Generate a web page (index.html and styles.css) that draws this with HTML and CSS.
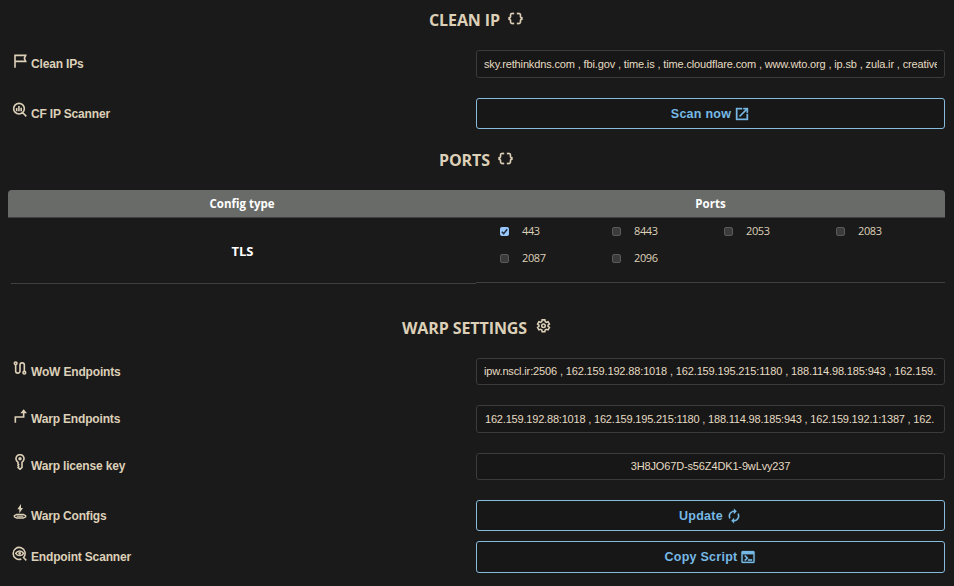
FILE: index.html
```html
<!DOCTYPE html>
<html lang="en">
<head>
<meta charset="utf-8">
<title>Settings</title>
<link rel="stylesheet" href="styles.css">
</head>
<body>
<svg width="0" height="0" class="defs">
  <symbol id="data" viewBox="0 0 24 24"><path stroke="currentColor" stroke-width=".3" d="M4 7v2c0 .55-.45 1-1 1H2v4h1c.55 0 1 .45 1 1v2c0 1.650 1.350 3 3 3h3v-2H7c-.55 0-1-.45-1-1v-2c0-1.300-.84-2.420-2-2.830v-.34C5.160 11.420 6 10.300 6 9V7c0-.55.45-1 1-1h3V4H7C5.350 4 4 5.350 4 7zM21 10c-.55 0-1-.45-1-1V7c0-1.650-1.350-3-3-3h-3v2h3c.55 0 1 .45 1 1v2c0 1.300.84 2.420 2 2.830v.34c-1.160.41-2 1.520-2 2.830v2c0 .55-.45 1-1 1h-3v2h3c1.650 0 3-1.350 3-3v-2c0-.55.45-1 1-1h1v-4z"/></symbol>
  <symbol id="launch" viewBox="0 0 24 24"><path stroke="currentColor" stroke-width=".6" d="M19 19H5V5h7V3H3v18h18v-9h-2zM14 3v2h3.590l-9.830 9.830 1.410 1.410L19 6.410V10h2V3z"/></symbol>
  <symbol id="sync" viewBox="0 0 24 24"><path stroke="currentColor" stroke-width=".4" d="M12 6v3l4-4-4-4v3c-4.420 0-8 3.580-8 8 0 1.570.46 3.030 1.240 4.260L6.700 14.800A5.870 5.870 0 0 1 6 12c0-3.310 2.690-6 6-6zm6.760 1.740L17.300 9.200c.44.84.7 1.790.7 2.800 0 3.310-2.690 6-6 6v-3l-4 4 4 4v-3c4.420 0 8-3.580 8-8 0-1.570-.46-3.030-1.240-4.260z"/></symbol>
  <symbol id="terminal" viewBox="0 0 24 24"><path stroke="currentColor" stroke-width=".4" fill-rule="evenodd" d="M4 3h16c1.100 0 2 .9 2 2v14c0 1.100-.9 2-2 2H4c-1.100 0-2-.9-2-2V5c0-1.100.9-2 2-2zm0 5v11h16V8zm2.500 2.500L8 9l4.500 4.500L8 18l-1.500-1.500 3-3zM12 15.500h6v2h-6z"/></symbol>
  <symbol id="gear" viewBox="0 0 24 24"><g fill="none" stroke="currentColor" stroke-width="2.500"><path d="M9.800 3h4.400l.5 2.800 1.900 1.100 2.700-1 2.200 3.800-2.200 1.800v1.900l2.200 1.800-2.200 3.800-2.700-1-1.900 1.100-.5 2.800H9.800l-.5-2.800-1.900-1.100-2.700 1-2.200-3.800 2.200-1.800v-1.900L2.500 9.700l2.200-3.800 2.700 1 1.900-1.100z"/><circle cx="12" cy="12.400" r="2.800"/></g></symbol>
  <symbol id="flag" viewBox="0 0 24 24"><path fill="none" stroke="currentColor" stroke-width="2.400" d="M4.500 22V3.500h16L18.500 8l2 4.500h-16"/></symbol>
  <symbol id="scan" viewBox="0 0 24 24"><path fill="none" stroke="currentColor" stroke-width="2.400" d="M15.800 15.800 21.500 21.500M18.500 10a8 8 0 1 1-16 0 8 8 0 0 1 16 0M7 9v5M10.400 6v8M13.800 8.500v5.500"/></symbol>
  <symbol id="watch" viewBox="0 0 24 24"><g fill="none" stroke="currentColor" stroke-width="2.300"><path d="m16.500 16.500 5 5M17.500 17A9 9 0 1 0 14 19.500"/><path d="M5.500 11c3-4.500 9-4.500 12 0-3 4.500-9 4.500-12 0z"/><circle cx="11.500" cy="11" r="1"/></g></symbol>
  <symbol id="route" viewBox="0 0 24 24"><g fill="none" stroke="currentColor" stroke-width="2.400"><path d="M5.500 7v9.500a3.200 3.200 0 0 0 6.500 0v-9a3.200 3.200 0 0 1 6.500 0V17"/><circle cx="5.500" cy="5" r="2"/><circle cx="18.500" cy="19" r="2"/></g></symbol>
  <symbol id="turn" viewBox="0 0 24 24"><path fill="none" stroke="currentColor" stroke-width="2.400" d="M5 22v-8.500h12.500V5"/><path d="M12.500 8 17.500 2l5 6z"/></symbol>
  <symbol id="key" viewBox="0 0 24 24"><g fill="none" stroke="currentColor" stroke-width="2.400"><path d="M9 12.200A6 6 0 1 1 15 12.200V20l-3 3-3-3 1-1.500L9 17l1-1.500-1-1z"/><circle cx="12" cy="7" r="1.400"/></g></symbol>
  <symbol id="charge" viewBox="0 0 24 24"><path d="M13.500 0 8 8h3v6l5.500-8h-3z"/><path fill="none" stroke="currentColor" stroke-width="2" d="M7 15.500h10l3.500 1.800v2L17 21H7l-3.500-1.700v-2zM7 18.300h10"/></symbol>
</svg>
<main>
  <h2 class="h-clean"><span>CLEAN IP</span><svg><use href="#data"/></svg></h2>
  <div class="row">
    <label><svg><use href="#flag"/></svg><span>Clean IPs</span></label>
    <div class="field"><span>sky.rethinkdns.com , fbi.gov , time.is , time.cloudflare.com , www.wto.org , ip.sb , zula.ir , creative</span></div>
  </div>
  <div class="row gap20">
    <label><svg><use href="#scan"/></svg><span>CF IP Scanner</span></label>
    <button>Scan now<svg><use href="#launch"/></svg></button>
  </div>
  <h2 class="h-ports"><span>PORTS</span><svg><use href="#data"/></svg></h2>
  <div class="ports">
    <div class="thead"><span>Config type</span><span>Ports</span></div>
    <div class="tbody">
      <div class="type">TLS</div>
      <div class="list">
        <span><i class="on"><svg viewBox="0 0 9 9"><path d="m1.800 4.700 1.900 1.900 3.500-4.300"/></svg></i><b>443</b></span>
        <span><i></i><b>8443</b></span><span><i></i><b>2053</b></span><span><i></i><b>2083</b></span>
        <span><i></i><b>2087</b></span><span><i></i><b>2096</b></span>
      </div>
    </div>
  </div>
  <h2 class="h-warp"><span>WARP SETTINGS</span><svg><use href="#gear"/></svg></h2>
  <div class="row short">
    <label><svg><use href="#route"/></svg><span>WoW Endpoints</span></label>
    <div class="field"><span>ipw.nscl.ir:2506 , 162.159.192.88:1018 , 162.159.195.215:1180 , 188.114.98.185:943 , 162.159.1</span></div>
  </div>
  <div class="row gap20">
    <label><svg><use href="#turn"/></svg><span>Warp Endpoints</span></label>
    <div class="field"><span class="tight">162.159.192.88:1018 , 162.159.195.215:1180 , 188.114.98.185:943 , 162.159.192.1:1387 , 162.</span></div>
  </div>
  <div class="row gap20 short">
    <label class="raised"><svg><use href="#key"/></svg><span>Warp license key</span></label>
    <div class="field center"><span>3H8JO67D-s56Z4DK1-9wLvy237</span></div>
  </div>
  <div class="row gap20">
    <label><svg><use href="#charge"/></svg><span>Warp Configs</span></label>
    <button>Update<svg><use href="#sync"/></svg></button>
  </div>
  <div class="row gap10">
    <label><svg><use href="#watch"/></svg><span>Endpoint Scanner</span></label>
    <button class="tall">Copy Script<svg><use href="#terminal"/></svg></button>
  </div>
</main>
</body>
</html>
```
FILE: styles.css
```css
* { box-sizing: border-box; }
body {
  margin: 0;
  background: #1a1a1a;
  color: #ddd0b8;
  font-family: "Liberation Sans", Arial, sans-serif;
  overflow: hidden;
}
.defs { display: block; }
svg { fill: currentColor; flex: none; }
main { padding: 0 9px 0 8px; }

h2 {
  margin: 0;
  display: flex;
  justify-content: center;
  align-items: flex-start;
  gap: 7px;
  font: 700 16px/20px "Open Sans", "Noto Sans", sans-serif;
  letter-spacing: -.1px;
}
h2 svg { width: 17px; height: 17px; }
.h-clean { height: 50px; padding-top: 10px; }
.h-ports { height: 61px; padding-top: 21px; }
.h-warp { height: 74px; padding-top: 34px; gap: 9px; }
.h-warp svg { width: 15px; height: 15px; }

.row { display: grid; grid-template-columns: 468px 469px; align-items: center; }
.gap20 { margin-top: 20px; }
.gap10 { margin-top: 10px; }
label {
  display: flex;
  align-items: center;
  gap: 3px;
  padding-left: 4px;
  font-size: 12px;
  font-weight: 700;
  line-height: 16px;
  letter-spacing: -.17px;
}
label svg { width: 16px; height: 16px; margin-bottom: 7px; }
.raised { padding-bottom: 2px; }
.field {
  height: 28px;
  border: 1px solid #3b3b3b;
  border-radius: 3px;
  padding: 0 7px;
  background: #171717;
  color: #e6dbc2;
  font-size: 11px;
  line-height: 26px;
  letter-spacing: -.14px;
}
.short .field { height: 27px; line-height: 25px; }
.field span { display: block; overflow: hidden; white-space: nowrap; }
.field .tight { letter-spacing: -.19px; padding-left: 1px; }
.center { text-align: center; }
button {
  height: 31px;
  display: flex;
  align-items: center;
  justify-content: center;
  gap: 3px;
  padding: 0;
  border: 1px solid #87bbdc;
  border-radius: 3px;
  background: #171717;
  color: #76b9e5;
  font: 700 12.500px/16px "Liberation Sans", Arial, sans-serif;
  letter-spacing: .25px;
}
.tall { height: 32px; }
button svg { width: 16px; height: 16px; }

.thead {
  display: grid;
  grid-template-columns: 468px 469px;
  height: 27px;
  border-radius: 4px 4px 0 0;
  background: #696b68;
  color: #fff;
  font: 700 11.500px/27px "Open Sans", "Noto Sans", sans-serif;
  text-align: center;
}
.tbody {
  display: grid;
  grid-template-columns: 468px 469px;
  height: 67px;
  font-family: "Open Sans", "Noto Sans", sans-serif;
  border-top: 1px solid #404040;
}
.type {
  height: 66px;
  margin-left: 3px;
  border-bottom: 1px solid #404040;
  text-align: center;
  font-size: 13px;
  font-weight: 700;
  line-height: 66px;
  color: #fff;
  padding-right: 2px;
}
.list {
  height: 65px;
  display: grid;
  grid-template-columns: repeat(4, 112px);
  grid-auto-rows: 27px;
  padding-left: 24px;
  border-bottom: 1px solid #404040;
  font-size: 11px;
  line-height: 25px;
  letter-spacing: -.4px;
}
.list span { display: flex; align-items: center; gap: 13px; }
.list b { font-weight: 400; padding-bottom: 2px; }
.list i {
  width: 9px;
  height: 9px;
  border: 1px solid #5a5a5a;
  border-radius: 2px;
  background: #3b3b3b;
}
.list i.on { border: 0; background: #99c8ff; }
.on svg { display: block; width: 9px; height: 9px; fill: none; stroke: #202a38; stroke-width: 1.500; }
```
